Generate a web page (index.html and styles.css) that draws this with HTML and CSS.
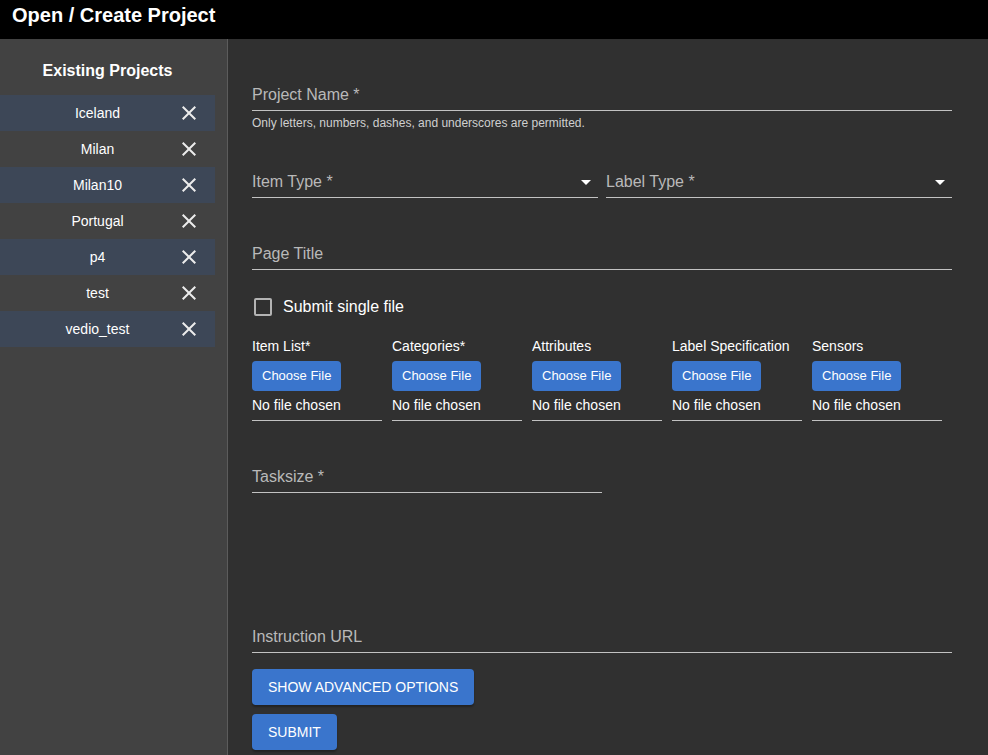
FILE: index.html
```html
<!DOCTYPE html>
<html lang="en">
<head>
<meta charset="utf-8">
<title>Open / Create Project</title>
<link rel="stylesheet" href="styles.css">
</head>
<body>
<header class="topbar"><h1 class="title">Open / Create Project</h1></header>
<div class="layout">
  <aside class="sidebar">
    <h2 class="side-title">Existing Projects</h2>
    <ul class="projects">
      <li class="project alt"><span class="pname">Iceland</span><svg class="close" viewBox="0 0 24 24"><path d="M19 6.41L17.59 5 12 10.59 6.41 5 5 6.41 10.59 12 5 17.59 6.41 19 12 13.41 17.59 19 19 17.59 13.41 12z"/></svg></li>
      <li class="project"><span class="pname">Milan</span><svg class="close" viewBox="0 0 24 24"><path d="M19 6.41L17.59 5 12 10.59 6.41 5 5 6.41 10.59 12 5 17.59 6.41 19 12 13.41 17.59 19 19 17.59 13.41 12z"/></svg></li>
      <li class="project alt"><span class="pname">Milan10</span><svg class="close" viewBox="0 0 24 24"><path d="M19 6.41L17.59 5 12 10.59 6.41 5 5 6.41 10.59 12 5 17.59 6.41 19 12 13.41 17.59 19 19 17.59 13.41 12z"/></svg></li>
      <li class="project"><span class="pname">Portugal</span><svg class="close" viewBox="0 0 24 24"><path d="M19 6.41L17.59 5 12 10.59 6.41 5 5 6.41 10.59 12 5 17.59 6.41 19 12 13.41 17.59 19 19 17.59 13.41 12z"/></svg></li>
      <li class="project alt"><span class="pname">p4</span><svg class="close" viewBox="0 0 24 24"><path d="M19 6.41L17.59 5 12 10.59 6.41 5 5 6.41 10.59 12 5 17.59 6.41 19 12 13.41 17.59 19 19 17.59 13.41 12z"/></svg></li>
      <li class="project"><span class="pname">test</span><svg class="close" viewBox="0 0 24 24"><path d="M19 6.41L17.59 5 12 10.59 6.41 5 5 6.41 10.59 12 5 17.59 6.41 19 12 13.41 17.59 19 19 17.59 13.41 12z"/></svg></li>
      <li class="project alt"><span class="pname">vedio_test</span><svg class="close" viewBox="0 0 24 24"><path d="M19 6.41L17.59 5 12 10.59 6.41 5 5 6.41 10.59 12 5 17.59 6.41 19 12 13.41 17.59 19 19 17.59 13.41 12z"/></svg></li>
    </ul>
  </aside>
  <main class="main">
    <form class="form">
      <div class="field"><span class="field-label">Project Name *</span></div>
      <p class="helper">Only letters, numbers, dashes, and underscores are permitted.</p>

      <div class="select-row">
        <div class="field select"><span class="field-label">Item Type *</span><svg class="arrow" viewBox="0 0 24 24"><path d="M7 10l5 5 5-5z"/></svg></div>
        <div class="field select"><span class="field-label">Label Type *</span><svg class="arrow" viewBox="0 0 24 24"><path d="M7 10l5 5 5-5z"/></svg></div>
      </div>

      <div class="field page-title"><span class="field-label">Page Title</span></div>

      <label class="check-row"><span class="checkbox"></span><span class="check-text">Submit single file</span></label>

      <div class="files">
        <div class="file"><span class="file-label">Item List*</span><span class="choose">Choose File</span><span class="nofile">No file chosen</span></div>
        <div class="file"><span class="file-label">Categories*</span><span class="choose">Choose File</span><span class="nofile">No file chosen</span></div>
        <div class="file"><span class="file-label">Attributes</span><span class="choose">Choose File</span><span class="nofile">No file chosen</span></div>
        <div class="file"><span class="file-label">Label Specification</span><span class="choose">Choose File</span><span class="nofile">No file chosen</span></div>
        <div class="file"><span class="file-label">Sensors</span><span class="choose">Choose File</span><span class="nofile">No file chosen</span></div>
      </div>

      <div class="field tasksize"><span class="field-label">Tasksize *</span></div>

      <div class="field instruction"><span class="field-label">Instruction URL</span></div>

      <button type="button" class="btn advanced">SHOW ADVANCED OPTIONS</button>
      <button type="button" class="btn submit">SUBMIT</button>
    </form>
  </main>
</div>
</body>
</html>
```

FILE: styles.css
```css
* { box-sizing: border-box; }
html, body { margin: 0; padding: 0; }
body {
  font-family: "Liberation Sans", Arial, sans-serif;
  background: #303030;
  color: #fff;
  width: 988px;
  height: 755px;
  overflow: hidden;
}
.topbar {
  height: 39px;
  background: #000;
  padding: 4px 12px 0;
}
.title {
  margin: 0;
  font-size: 20px;
  line-height: 23px;
  font-weight: bold;
  color: #fff;
}
.layout {
  display: flex;
  height: 716px;
}
.sidebar {
  width: 228px;
  flex: none;
  background: #424242;
  border-right: 1px solid #5c5c5c;
  padding-top: 22px;
}
.side-title {
  margin: 0 0 15px;
  width: 215px;
  text-align: center;
  font-size: 16px;
  line-height: 19px;
  font-weight: bold;
  color: #fff;
}
.projects {
  list-style: none;
  margin: 0;
  padding: 0;
  width: 215px;
}
.project {
  display: flex;
  align-items: center;
  height: 36px;
  padding: 0 14px 0 18px;
}
.project.alt { background: #3d4757; }
.pname {
  flex: 1;
  text-align: center;
  font-size: 14px;
  color: #fff;
}
.close {
  width: 24px;
  height: 24px;
  fill: #ececec;
  flex: none;
}
.main {
  flex: 1;
  padding: 46px 24px 0;
}
.form { width: 700px; }
.field {
  position: relative;
  border-bottom: 1px solid #c2c2c2;
  padding-bottom: 6px;
}
.field-label {
  display: block;
  font-size: 16px;
  line-height: 19px;
  color: #b9b9b9;
}
.helper {
  margin: 5px 0 0;
  font-size: 12px;
  line-height: 14px;
  color: #cfcfcf;
}
.select-row {
  margin-top: 42px;
  display: grid;
  grid-template-columns: 1fr 1fr;
  gap: 8px;
}
.arrow {
  position: absolute;
  right: 0;
  top: -2px;
  width: 24px;
  height: 24px;
  fill: #fff;
}
.page-title { margin-top: 46px; }
.check-row {
  margin-top: 25px;
  display: flex;
  align-items: center;
  height: 24px;
}
.checkbox {
  width: 18px;
  height: 18px;
  margin-left: 2px;
  border: 2px solid #b3b3b3;
  border-radius: 2px;
}
.check-text {
  margin-left: 11px;
  font-size: 16px;
  color: #fff;
}
.files {
  margin-top: 19px;
  display: flex;
  gap: 10px;
}
.file {
  width: 130px;
  display: flex;
  flex-direction: column;
  align-items: flex-start;
  border-bottom: 1px solid #c2c2c2;
  padding-bottom: 7px;
}
.file-label {
  font-size: 14px;
  line-height: 16px;
  color: #fff;
}
.choose {
  margin-top: 7px;
  height: 30px;
  line-height: 30px;
  padding: 0 10px;
  font-size: 13px;
  background: #3a75cc;
  border-radius: 4px;
  color: #fff;
}
.nofile {
  margin-top: 6px;
  font-size: 14px;
  line-height: 16px;
  color: #fff;
}
.tasksize {
  margin-top: 46px;
  width: 350px;
}
.instruction { margin-top: 134px; }
.btn {
  display: block;
  height: 36px;
  padding: 0 16px;
  border: none;
  border-radius: 4px;
  background: #3a75cc;
  color: #fff;
  font-family: "Liberation Sans", Arial, sans-serif;
  font-size: 14px;
  box-shadow: 0 2px 2px rgba(0,0,0,0.3);
}
.advanced { margin-top: 16px; }
.submit { margin-top: 9px; }
```
